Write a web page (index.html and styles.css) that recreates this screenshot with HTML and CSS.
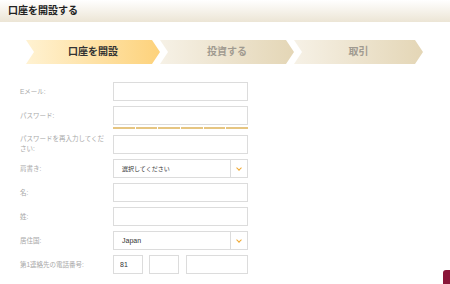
FILE: index.html
```
<!DOCTYPE html>
<html lang="ja">
<head>
    <meta charset="UTF-8">
    <meta name="viewport" content="width=device-width, initial-scale=1.0">
    <title>口座を開設する</title>
    <link rel="stylesheet" href="styles.css">
</head>
<body>
    <div class="header">口座を開設する</div>

    <div class="steps">
        <div class="step active">口座を開設</div>
        <div class="step">投資する</div>
        <div class="step last">取引</div>
    </div>

    <form class="form">
        <div class="row">
            <label>Eメール:</label>
            <input type="text" class="field">
        </div>
        <div class="row top">
            <label>パスワード:</label>
            <div class="stack">
                <input type="password" class="field">
                <div class="meter">
                    <span></span><span></span><span></span><span></span><span></span><span></span>
                </div>
            </div>
        </div>
        <div class="row">
            <label>パスワードを再入力してください:</label>
            <input type="password" class="field">
        </div>
        <div class="row">
            <label>肩書き:</label>
            <div class="select field"><span class="jp">選択してください</span><i class="arrow"></i></div>
        </div>
        <div class="row">
            <label>名:</label>
            <input type="text" class="field">
        </div>
        <div class="row">
            <label>姓:</label>
            <input type="text" class="field">
        </div>
        <div class="row">
            <label>居住国:</label>
            <div class="select field"><span>Japan</span><i class="arrow"></i></div>
        </div>
        <div class="row">
            <label>第1連絡先の電話番号:</label>
            <div class="phone">
                <input type="text" class="field code" value="81">
                <input type="text" class="field area">
                <input type="text" class="field num">
            </div>
        </div>
    </form>

    <div class="tab"></div>
</body>
</html>
```

FILE: styles.css
```
body {
    margin: 0;
    font-family: "Liberation Sans", "Noto Sans CJK JP", sans-serif;
    background: #fff;
    overflow: hidden;
}
.header {
    height: 22px;
    line-height: 22px;
    padding-left: 8px;
    font-size: 10px;
    font-weight: bold;
    color: #222;
    background: linear-gradient(to bottom, #ffffff, #ece5d5);
}
.steps {
    display: flex;
    margin-top: 18px;
    padding-left: 26px;
}
.step {
    width: 134px;
    height: 24px;
    line-height: 24px;
    text-align: center;
    font-size: 10px;
    font-weight: bold;
    color: #a09a90;
    background: linear-gradient(to right, #f6f1e6, #e4d6b6);
    clip-path: polygon(0 0, calc(100% - 8px) 0, 100% 50%, calc(100% - 8px) 100%, 0 100%, 8px 50%);
}
.step.active {
    color: #333;
    background: linear-gradient(to right, #fff2d2, #fdd27b);
}
.step.last {
    width: 129px;
}
.form {
    margin-top: 18px;
    padding-left: 20px;
}
.row {
    display: flex;
    align-items: center;
    margin-bottom: 5px;
}
.row.top {
    align-items: flex-start;
}
.row.top label {
    line-height: 19px;
}
label {
    width: 86px;
    margin-right: 7px;
    font-size: 6.5px;
    line-height: 10px;
    color: #a8a8a8;
}
.field {
    box-sizing: border-box;
    width: 135px;
    height: 19px;
    margin: 0;
    padding: 0 6px;
    border: 1px solid #dcdcdc;
    font-family: inherit;
    font-size: 7px;
    color: #333;
    background: #fff;
}
.stack {
    display: flex;
    flex-direction: column;
}
.meter {
    display: flex;
    gap: 1px;
    width: 135px;
    margin-top: 2px;
}
.meter span {
    flex: 1;
    height: 2px;
    background: #e6c581;
}
.select {
    display: flex;
    align-items: center;
    padding: 0 0 0 8px;
}
.select span {
    flex: 1;
}
.select .jp {
    font-size: 6px;
}
.arrow {
    width: 16px;
    height: 17px;
    border-left: 1px solid #dcdcdc;
    display: flex;
    align-items: center;
    justify-content: center;
}
.arrow::before {
    content: "";
    width: 3px;
    height: 3px;
    border-right: 1.5px solid #f0a830;
    border-bottom: 1.5px solid #f0a830;
    transform: translateY(-1px) rotate(45deg);
}
.phone {
    display: flex;
}
.phone .code {
    width: 30px;
    margin-right: 6px;
}
.phone .area {
    width: 30px;
    margin-right: 7px;
}
.phone .num {
    width: 62px;
}
.tab {
    position: absolute;
    right: 0;
    top: 270px;
    width: 7px;
    height: 20px;
    background: #8a1538;
    border-top-left-radius: 3px;
}
```
